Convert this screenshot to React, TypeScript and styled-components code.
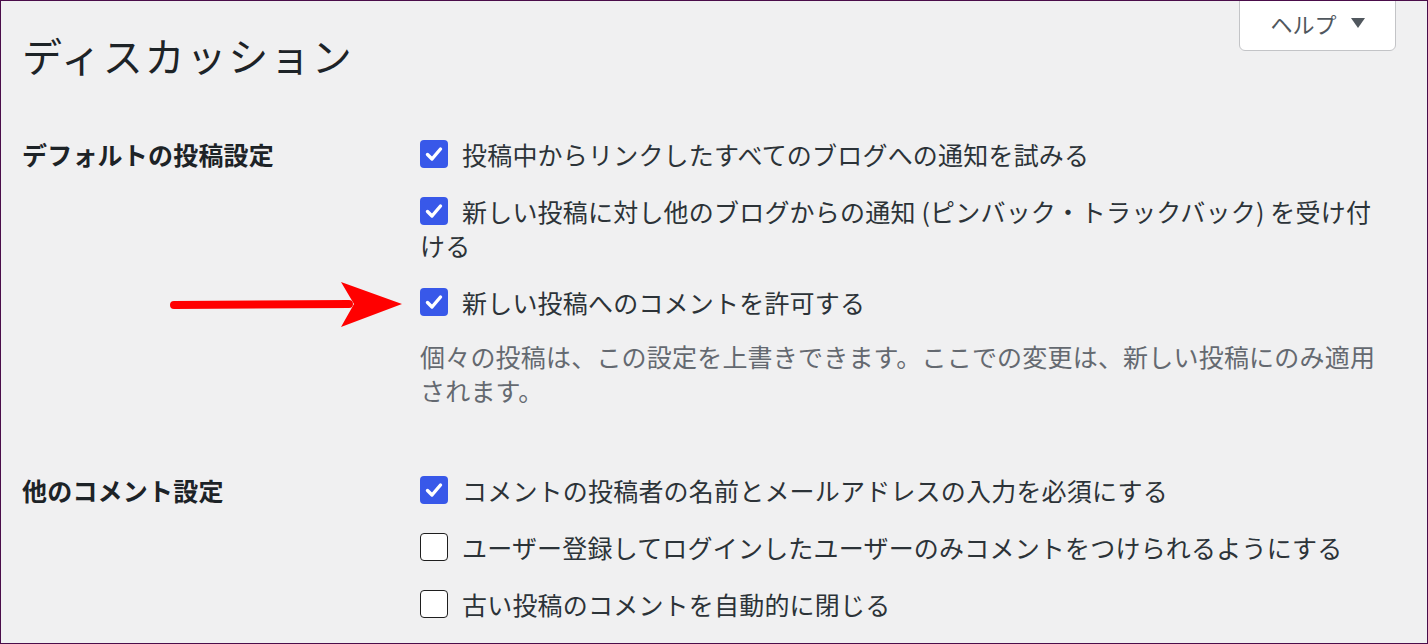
import React from 'react'
import styled, {createGlobalStyle} from "styled-components";

const GlobalStyle = createGlobalStyle`
    body {
        margin: 0;
        background: #f0f0f1;
        font-family: "Noto Sans CJK JP", "Noto Sans", sans-serif;
    }
`

const Frame = styled.div`
    position: relative;
    width: 1428px;
    height: 644px;
    box-sizing: border-box;
    border: 1px solid #4a0d4a;
    background: #f0f0f1;
    padding: 0 31px 0 21px;
    overflow: hidden;
`

const Header = styled.div`
    display: flex;
    justify-content: space-between;
    align-items: flex-start;
`

const Title = styled.h1`
    margin: 28px 0 0;
    font-size: 40px;
    font-weight: 400;
    line-height: 52px;
    letter-spacing: 1.8px;
    color: #1d2327;
`

const HelpButton = styled.button`
    display: flex;
    align-items: center;
    justify-content: center;
    gap: 14px;
    width: 157px;
    height: 51px;
    margin-top: -1px;
    padding: 0 0 6px;
    background: #fff;
    border: 1px solid #c3c4c7;
    border-radius: 0 0 6px 6px;
    font-family: inherit;
    font-size: 22px;
    color: #50575e;
    cursor: pointer;
`

const Form = styled.div`
    display: flex;
    flex-direction: column;
    gap: 66px;
    margin-top: 56px;
`

const Section = styled.div`
    display: grid;
    grid-template-columns: 398px 962px;
`

const Label = styled.div`
    font-size: 25px;
    font-weight: 700;
    line-height: 34px;
    letter-spacing: 0.2px;
    color: #1d2327;
`

const Options = styled.div`
    display: flex;
    flex-direction: column;
    gap: 23px;
`

const Option = styled.label`
    display: block;
    font-size: 25px;
    line-height: 34px;
    letter-spacing: 0.2px;
    color: #2c3338;
`

const Box = styled.span<{ $checked: boolean }>`
    display: inline-flex;
    align-items: center;
    justify-content: center;
    vertical-align: top;
    width: 28px;
    height: 28px;
    margin: 3px 14px 0 0;
    box-sizing: border-box;
    border-radius: 4px;
    background: ${p => p.$checked ? '#3858e9' : '#fff'};
    border: ${p => p.$checked ? 'none' : '1.5px solid #1e1e1e'};
`

const Description = styled.p`
    margin: 20px 0 0;
    font-size: 25px;
    line-height: 34px;
    letter-spacing: 0.2px;
    color: #646970;
`

const Arrow = styled.svg`
    position: absolute;
    left: 168px;
    top: 278px;
`

type CheckProps = { checked?: boolean, children: React.ReactNode }
const Check: React.FC<CheckProps> = ({checked = false, children}) => (
    <Option>
        <Box $checked={checked}>
            {checked && (
                <svg width="20" height="20" viewBox="0 0 20 20">
                    <path d="M3.5 10.5 L8 15 L16.5 5" fill="none" stroke="#fff" strokeWidth="3.4"
                          strokeLinecap="round" strokeLinejoin="round"/>
                </svg>
            )}
        </Box>
        {children}
    </Option>
)

const App: React.FC = () => {
    return (
        <Frame>
            <GlobalStyle/>
            <Header>
                <Title>ディスカッション</Title>
                <HelpButton>
                    ヘルプ
                    <svg width="14" height="10" viewBox="0 0 14 10">
                        <polygon points="0,0 14,0 7,10" fill="#50575e"/>
                    </svg>
                </HelpButton>
            </Header>

            <Form>
                <Section>
                    <Label>デフォルトの投稿設定</Label>
                    <div>
                        <Options>
                            <Check checked>投稿中からリンクしたすべてのブログへの通知を試みる</Check>
                            <Check checked>新しい投稿に対し他のブログからの通知 (ピンバック・トラックバック) を受け付ける</Check>
                            <Check checked>新しい投稿へのコメントを許可する</Check>
                        </Options>
                        <Description>
                            個々の投稿は、この設定を上書きできます。ここでの変更は、新しい投稿にのみ適用されます。
                        </Description>
                    </div>
                </Section>

                <Section>
                    <Label>他のコメント設定</Label>
                    <Options>
                        <Check checked>コメントの投稿者の名前とメールアドレスの入力を必須にする</Check>
                        <Check>ユーザー登録してログインしたユーザーのみコメントをつけられるようにする</Check>
                        <Check>古い投稿のコメントを自動的に閉じる</Check>
                    </Options>
                </Section>
            </Form>

            <Arrow width="240" height="52" viewBox="0 0 240 52">
                <line x1="5" y1="26" x2="180" y2="25" stroke="#ff0000" strokeWidth="8" strokeLinecap="round"/>
                <polygon points="172,3 233,25 172,48 185,25" fill="#ff0000"/>
            </Arrow>
        </Frame>
    )
}

export default App;
